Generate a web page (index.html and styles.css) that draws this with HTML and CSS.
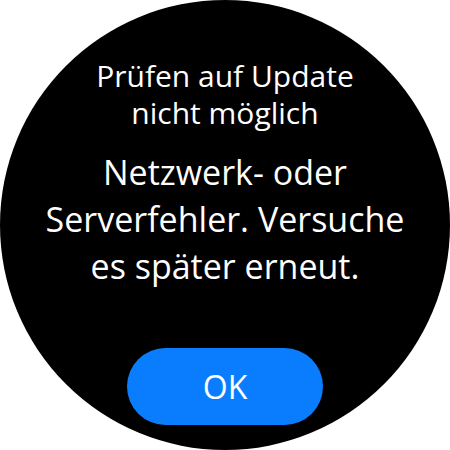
FILE: index.html
```html
<!DOCTYPE html>
<html>
<head>
<meta charset="utf-8">
<link rel="stylesheet" href="styles.css">
</head>
<body>
<div class="watch">
  <div class="title">Prüfen auf Update<br>nicht möglich</div>
  <div class="message">Netzwerk- oder<br>Serverfehler. Versuche<br>es später erneut.</div>
  <div class="button">OK</div>
</div>
</body>
</html>
```
FILE: styles.css
```css
html, body {
  margin: 0;
  padding: 0;
  background: #ffffff;
}
.watch {
  width: 450px;
  height: 450px;
  border-radius: 50%;
  background: #000000;
  display: flex;
  flex-direction: column;
  align-items: center;
  box-sizing: border-box;
  padding-top: 57px;
  font-family: "Open Sans", sans-serif;
  color: #ffffff;
  text-align: center;
}
.title {
  font-size: 30px;
  line-height: 37px;
}
.message {
  font-size: 34px;
  line-height: 47px;
  margin-top: 18px;
}
.button {
  margin-top: 58px;
  width: 196px;
  height: 77px;
  border-radius: 38.5px;
  background: #0a7dff;
  font-size: 32px;
  line-height: 77px;
}
```
